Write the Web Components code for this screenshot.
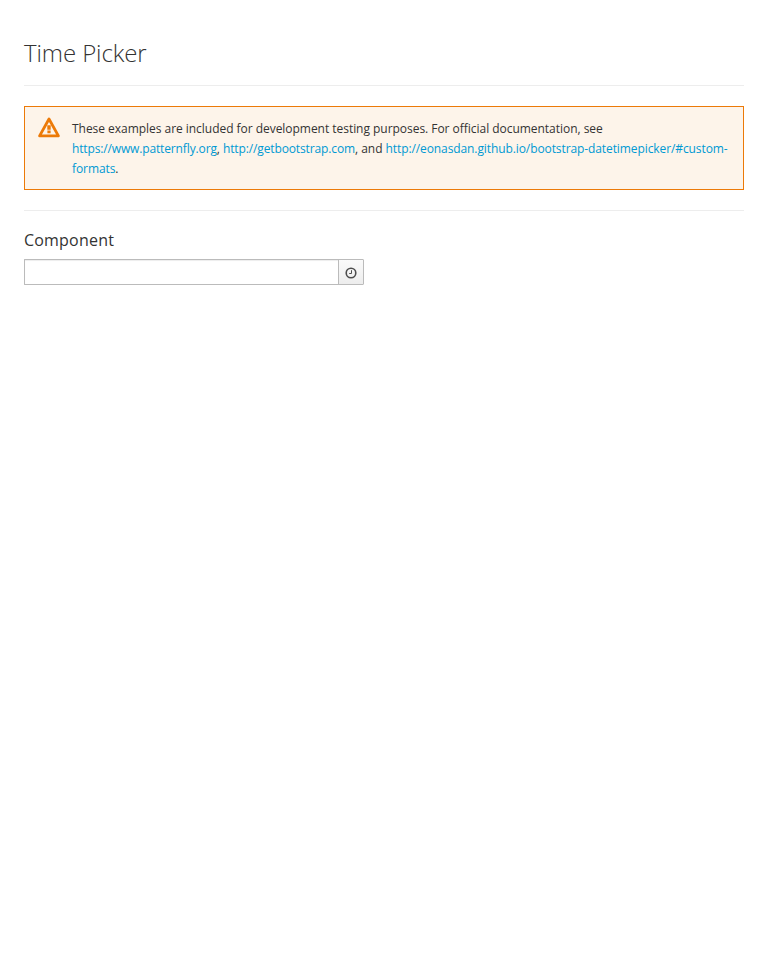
<!DOCTYPE html>
<html lang="en"><head><meta charset="utf-8"><title>Time Picker</title>
<style>body{margin:0;background:#fff;color:#333;font:12px/20px "Open Sans",sans-serif;font-feature-settings:"liga" 1}
a{color:#0099d3;text-decoration:none;letter-spacing:-.145px}
a.path{letter-spacing:-.095px}</style></head><body>
<time-page>
<page-header>Time Picker</page-header>
<warning-alert>These examples are included for development testing purposes. For official documentation, see <a href="#">https://www.patternfly.org</a>, <a href="#" style="letter-spacing:-.125px">http://getbootstrap.com</a>, and <a class="path" href="#">http://eonasdan.github.io/bootstrap-datetimepicker/#custom-formats</a>.</warning-alert>
<section-title>Component</section-title>
<time-field></time-field>
</time-page>
<script>
const define=(name,html)=>customElements.define(name,class extends HTMLElement{
  constructor(){super();this.attachShadow({mode:'open'}).innerHTML=html;}
});
define('time-page',`<style>:host{display:block;padding:0 24px}</style><slot></slot>`);
define('page-header',`<style>:host{display:block;padding:39px 0 19px;border-bottom:1px solid #ededed}
h1{margin:0;font-size:24px;line-height:27px;font-weight:300;letter-spacing:-.1px}</style><h1><slot></slot></h1>`);
define('warning-alert',`<style>:host{display:flex;box-sizing:border-box;margin-top:20px;border:1px solid #ec7a08;background:#fdf4ea;padding:11px 14px 11px 13px;gap:12px}
svg{flex:none;width:22px;height:22px;margin-top:-1px}p{margin:1px 0 -1px;letter-spacing:-.035px}</style>
<svg viewBox="0 0 22 22"><path d="M11 2 20.4 18.9H1.6Z" fill="none" stroke="#ec7a08" stroke-width="2.8" stroke-linejoin="round"/><path d="M9.3 8.3h3.4v4.4H9.3zM9.4 13.6h3.2V16.2H9.4z" fill="#ec7a08"/></svg><p><slot></slot></p>`);
define('section-title',`<style>:host{display:block;margin-top:20px;border-top:1px solid #ededed;padding-top:20px}
h2{margin:0;font-size:16px;line-height:18px;font-weight:400;letter-spacing:.2px}</style><h2><slot></slot></h2>`);
define('time-field',`<style>:host{display:flex;box-sizing:border-box;width:340px;height:26px;margin-top:10px;color:#333}
input{box-sizing:border-box;width:315px;height:26px;margin:0;border:1px solid #bbb;border-right:0;border-radius:1px 0 0 1px;padding:2px 6px;box-shadow:inset 0 1px 1px rgba(3,3,3,.075);font:inherit;outline:0}
button{box-sizing:border-box;width:26px;height:26px;margin:0 0 0 -1px;padding:1px 0 0;border:1px solid #bbb;border-radius:0 1px 1px 0;background:linear-gradient(#fafafa,#ededed);display:flex;align-items:center;justify-content:center}
svg{display:block;margin-top:1px}
</style><input aria-label="Time"><button aria-label="Pick time"><svg width="12" height="12" viewBox="0 0 12 12" fill="none" stroke="#4d4d4d"><circle cx="6" cy="6" r="4.8" stroke-width="1.6"/><path d="M6.5 3.2v3.3H4.2" stroke-width="1"/></svg></button>`);
</script></body></html>
